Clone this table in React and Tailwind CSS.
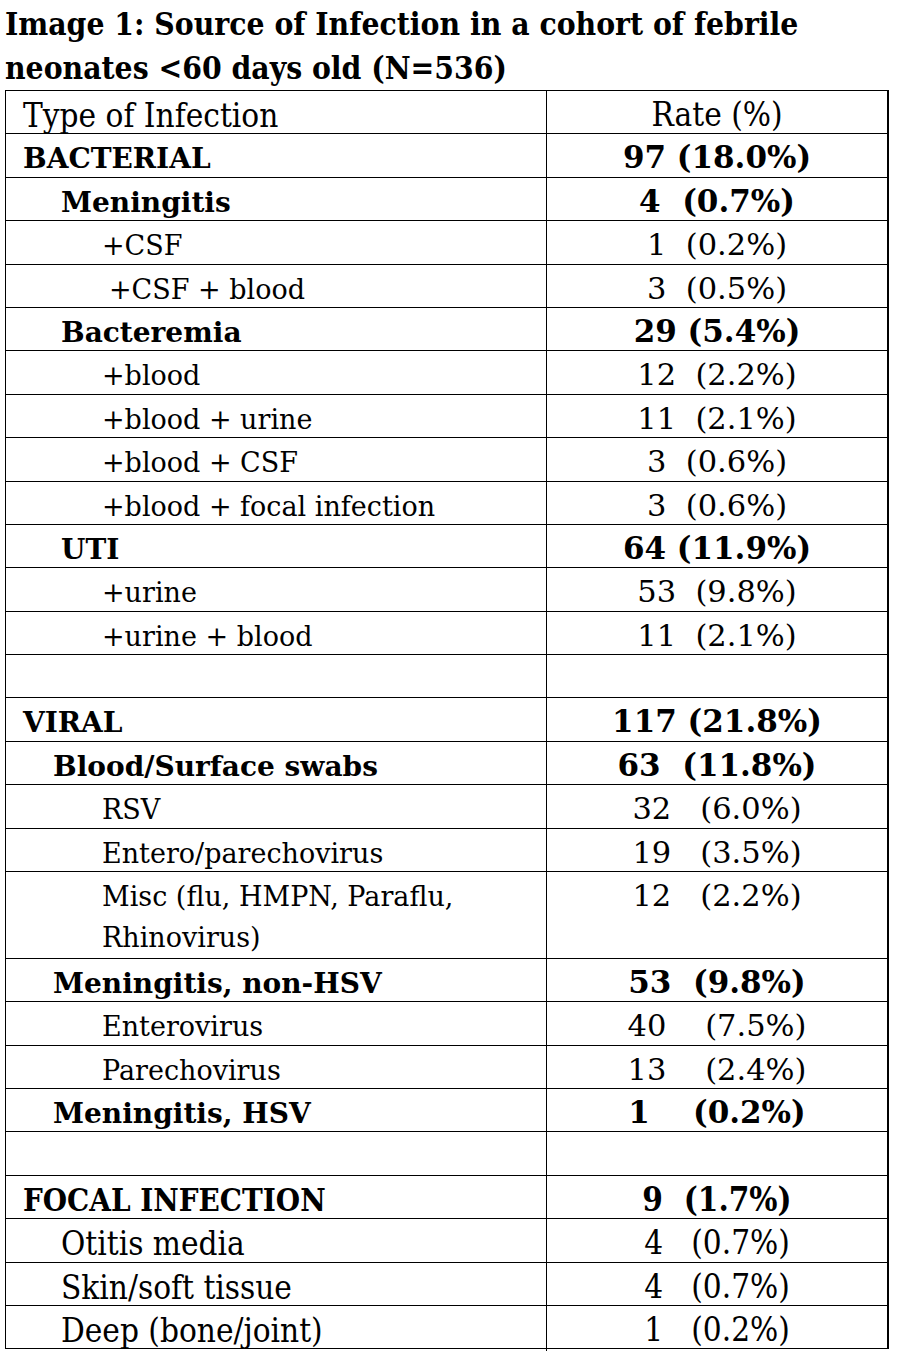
const rows = [
  { label: 'Type of Infection', rate: 'Rate (%)', indent: 'pl-[17px]', kind: 'head' },
  { label: 'BACTERIAL', rate: '97 (18.0%)', indent: 'pl-[17px]', kind: 'bold' },
  { label: 'Meningitis', rate: '4  (0.7%)', indent: 'pl-[55px]', kind: 'bold' },
  { label: '+CSF', rate: '1  (0.2%)', indent: 'pl-[96px]' },
  { label: '+CSF + blood', rate: '3  (0.5%)', indent: 'pl-[103px]' },
  { label: 'Bacteremia', rate: '29 (5.4%)', indent: 'pl-[55px]', kind: 'bold' },
  { label: '+blood', rate: '12  (2.2%)', indent: 'pl-[96px]' },
  { label: '+blood + urine', rate: '11  (2.1%)', indent: 'pl-[96px]' },
  { label: '+blood + CSF', rate: '3  (0.6%)', indent: 'pl-[96px]' },
  { label: '+blood + focal infection', rate: '3  (0.6%)', indent: 'pl-[96px]' },
  { label: 'UTI', rate: '64 (11.9%)', indent: 'pl-[55px]', kind: 'bold' },
  { label: '+urine', rate: '53  (9.8%)', indent: 'pl-[96px]' },
  { label: '+urine + blood', rate: '11  (2.1%)', indent: 'pl-[96px]' },
  { label: '', rate: '', indent: '' },
  { label: 'VIRAL', rate: '117 (21.8%)', indent: 'pl-[17px]', kind: 'bold' },
  { label: 'Blood/Surface swabs', rate: '63  (11.8%)', indent: 'pl-[47px]', kind: 'bold' },
  { label: 'RSV', rate: '32   (6.0%)', indent: 'pl-[96px]' },
  { label: 'Entero/parechovirus', rate: '19   (3.5%)', indent: 'pl-[96px]' },
  { label: 'Misc (flu, HMPN, Paraflu, Rhinovirus)', rate: '12   (2.2%)', indent: 'pl-[96px] pr-[40px]', tall: true },
  { label: 'Meningitis, non-HSV', rate: '53  (9.8%)', indent: 'pl-[47px]', kind: 'bold' },
  { label: 'Enterovirus', rate: '40    (7.5%)', indent: 'pl-[96px]' },
  { label: 'Parechovirus', rate: '13    (2.4%)', indent: 'pl-[96px]' },
  { label: 'Meningitis, HSV', rate: '1    (0.2%)', indent: 'pl-[47px]', kind: 'bold' },
  { label: '', rate: '', indent: '' },
  { label: 'FOCAL INFECTION', rate: '9  (1.7%)', indent: 'pl-[17px]', kind: 'boldc' },
  { label: 'Otitis media', rate: '4   (0.7%)', indent: 'pl-[55px]', kind: 'cond' },
  { label: 'Skin/soft tissue', rate: '4   (0.7%)', indent: 'pl-[55px]', kind: 'cond' },
  { label: 'Deep (bone/joint)', rate: '1   (0.2%)', indent: 'pl-[55px]', kind: 'cond' },
];

const condensed = "font-['DejaVu_Serif_Condensed','DejaVu_Serif',serif]";

const labelStyle = {
  head: `${condensed} text-[33px] font-normal`,
  bold: 'text-[28px] font-bold',
  boldc: `${condensed} text-[31px] font-bold`,
  cond: `${condensed} text-[33px] font-normal`,
};

const rateStyle = {
  head: `${condensed} text-[33px] font-normal`,
  bold: 'text-[31px] font-bold',
  boldc: `${condensed} text-[33px] font-bold`,
  cond: `${condensed} text-[33px] font-normal`,
};

const Row = ({ row }) => {
  const label = labelStyle[row.kind] || 'text-[27px] font-normal';
  const rate = rateStyle[row.kind] || 'text-[30.5px] font-normal';
  return (
    <div
      className={`grid grid-cols-[541px_1fr] border-b border-black ${row.tall ? 'h-[86.8px]' : 'h-[43.4px]'}`}
    >
      <div className={`border-r border-black pt-[4px] leading-[41px] whitespace-pre-wrap ${label} ${row.indent}`}>
        {row.label}
      </div>
      <div className={`pt-[3px] text-center leading-[41px] whitespace-pre ${rate}`}>{row.rate}</div>
    </div>
  );
};

export default function App() {
  return (
    <div className="min-h-screen w-[908px] bg-white text-black font-['DejaVu_Serif',serif]">
      <h1 className={`pl-[5px] pt-[2px] text-[31.5px] font-bold leading-[44px] ${condensed}`}>
        Image 1: Source of Infection in a cohort of febrile
        <br />
        neonates &lt;60 days old (N=536)
      </h1>
      <div className="ml-[5px] w-[884px] border-t border-l border-r-2 border-black">
        {rows.map((row, i) => (
          <Row key={i} row={row} />
        ))}
      </div>
    </div>
  );
}
